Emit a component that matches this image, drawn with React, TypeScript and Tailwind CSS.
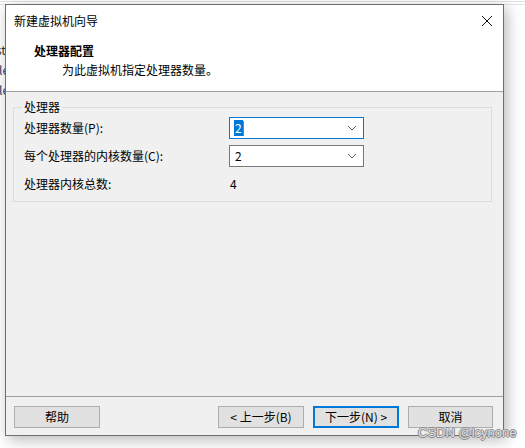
import React from 'react'

const font = { fontFamily: '"Noto Sans CJK SC", "Noto Sans", sans-serif' }

function Chevron() {
  return (
    <svg width="10" height="6" viewBox="0 0 10 6" className="shrink-0">
      <path d="M1 1l4 4 4-4" fill="none" stroke="#5f5f5f" strokeWidth="1" />
    </svg>
  )
}

function Combo({ value, focused }: { value: string; focused?: boolean }) {
  return (
    <div
      className={
        'flex h-[22px] w-[135px] items-center justify-between bg-white pl-[4px] pr-[6px] ' +
        (focused ? 'border border-[#0078d7]' : 'border border-[#7a7a7a]')
      }
    >
      {focused ? (
        <span className="flex items-center">
          <span className="bg-[#0078d7] px-[1px] leading-[16px] text-white">{value}</span>
          <span className="h-[15px] w-px bg-[#d96a1a]" />
        </span>
      ) : (
        <span className="px-[1px] leading-[16px] text-black">{value}</span>
      )}
      <Chevron />
    </div>
  )
}

function Btn({ label, primary, narrow }: { label: string; primary?: boolean; narrow?: boolean }) {
  return (
    <button
      className={
        'flex h-[22px] items-center justify-center bg-[#e1e1e1] text-[12px] text-black ' +
        (narrow ? 'w-[85px] ' : 'w-[86px] ') +
        (primary ? 'border-2 border-[#0078d7]' : 'border border-[#adadad]')
      }
    >
      {label}
    </button>
  )
}

export default function App() {
  return (
    <div className="relative h-[448px] w-[525px] overflow-hidden bg-white text-[12px]" style={font}>
      {/* window behind the dialog */}
      <div className="h-[4px] border-t border-b border-[#e3e3e3] mt-[1px]" />
      <div className="flex">
        <div className="w-[5px] overflow-hidden whitespace-nowrap pt-[35px] text-[12px] leading-[20px] text-[#333]">
          <div className="-ml-[4px]">st</div>
          <div className="-ml-[1px] text-[#1d3f6e]">le</div>
          <div className="-ml-[1px] text-[#1d3f6e]">le</div>
        </div>

        {/* dialog */}
        <div className="-mt-[1px] flex h-[432px] w-[499px] flex-col border border-[#6f6f6f] bg-[#f0f0f0] shadow-[3px_4px_14px_rgba(0,0,0,0.28)]">
          <div className="h-[86px] bg-white">
            <div className="flex h-[31px] items-center justify-between pl-[8px] pr-[10px]">
              <span className="leading-[16px] text-black">新建虚拟机向导</span>
              <svg width="12" height="12" viewBox="0 0 12 12">
                <path d="M1 1l10 10M11 1L1 11" stroke="#111" strokeWidth="1" />
              </svg>
            </div>
            <div className="pl-[28px] pt-[7px] font-bold leading-[16px] text-black">处理器配置</div>
            <div className="pl-[56px] pt-[3px] leading-[16px] text-black">为此虚拟机指定处理器数量。</div>
          </div>
          <div className="h-px bg-[#a0a0a0]" />

          <div className="flex-1 pt-[7px] pl-[7px] pr-[11px]">
            <fieldset className="border border-[#dcdcdc] pb-[9px] pl-[10px]">
              <legend className="ml-[-2px] px-[2px] leading-[16px] text-black">处理器</legend>
              <div className="flex flex-col pt-[2px]">
                <div className="flex items-center">
                  <span className="w-[205px] text-black">处理器数量(P):</span>
                  <Combo value="2" focused />
                </div>
                <div className="mt-[6px] flex items-center">
                  <span className="w-[205px] text-black">每个处理器的内核数量(C):</span>
                  <Combo value="2" />
                </div>
                <div className="mt-[9px] flex items-center leading-[16px]">
                  <span className="w-[205px] text-black">处理器内核总数:</span>
                  <span className="pl-[1px] text-black">4</span>
                </div>
              </div>
            </fieldset>
          </div>

          <div className="h-px bg-[#a0a0a0]" />
          <div className="flex h-[38px] items-start justify-between pl-[8px] pr-[10px] pt-[9px]">
            <Btn label="帮助" />
            <div className="flex gap-[9px]">
              <Btn label="< 上一步(B)" />
              <Btn label="下一步(N) >" primary />
              <Btn label="取消" narrow />
            </div>
          </div>
        </div>
      </div>

      <span
        className="absolute left-[418px] top-[425px] z-10 text-[13px] leading-[16px] text-[#dedede]"
        style={{
          fontFamily: '"Liberation Sans", Arial, sans-serif',
          textShadow: '1px 0 0 #8c8c8c, -1px 0 0 #8c8c8c, 0 1px 0 #8c8c8c, 0 -1px 0 #8c8c8c',
        }}
      >
        CSDN @lcynone
      </span>
    </div>
  )
}
